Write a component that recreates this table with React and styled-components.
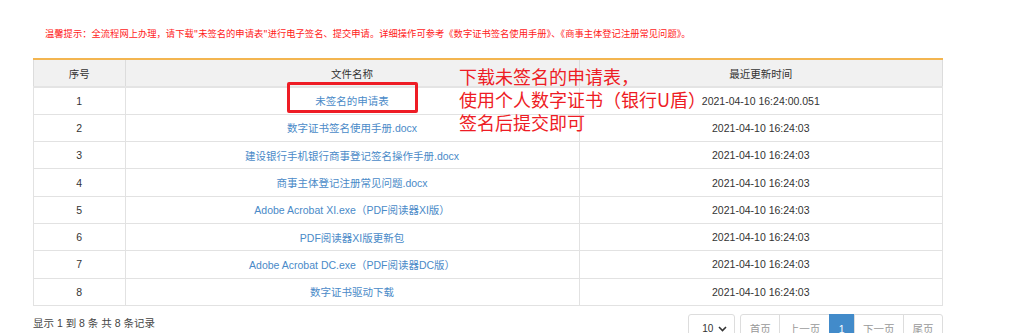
import React from "react";
import styled, { createGlobalStyle } from "styled-components";

const Global = createGlobalStyle`
  html, body { margin: 0; padding: 0; background: #fff; }
  body {
    font-family: "Liberation Sans", Arial, "Noto Sans CJK SC", sans-serif;
    font-size: 10.5px;
    color: #333;
  }
`;

const Page = styled.div`
  width: 1020px;
  height: 333px;
  overflow: hidden;
  padding: 0 77px 0 33px;
  box-sizing: border-box;
`;

const Notice = styled.p`
  margin: 0;
  padding: 27px 0 0 12px;
  height: 58px;
  box-sizing: border-box;
  line-height: 13px;
  font-size: 9.3px;
  color: #ff1a1a;
  font-family: "Noto Sans CJK SC", sans-serif;
`;

const TableWrap = styled.div`
  position: relative;
  width: 910px;
`;

const Table = styled.table`
  width: 100%;
  border-collapse: collapse;
  table-layout: fixed;
  border-top: 2px solid #f3b550;
`;

const Th = styled.th`
  width: ${p => p.w};
  height: 26px;
  background: #f1f1f1;
  font-weight: normal;
  color: #333;
  border-left: 1px solid #dcdcdc;
  border-right: 1px solid #dcdcdc;
  border-bottom: 2px solid #e4e4e4;
  padding: 0;
`;

const Tr = styled.tr`
  height: 27.3px;
`;

const Td = styled.td`
  border: 1px solid #e2e2e2;
  text-align: center;
  padding: 0;
  color: #333;
`;

const Link = styled.a`
  color: #4a8ac8;
  text-decoration: none;
`;

const Highlight = styled.div`
  position: absolute;
  left: 254px;
  top: 24px;
  width: 125px;
  height: 25px;
  border: 3px solid #ee1c25;
  border-radius: 2px;
  pointer-events: none;
`;

const Annotation = styled.div`
  position: absolute;
  left: 426px;
  top: 7px;
  font-size: 18px;
  line-height: 23px;
  color: #ee1c25;
  font-family: "Noto Sans CJK SC", sans-serif;
  white-space: nowrap;
`;

const Footer = styled.div`
  display: flex;
  justify-content: space-between;
  align-items: flex-start;
  width: 910px;
  margin-top: 8px;
`;

const Summary = styled.span`
  margin-top: 2px;
  line-height: 14px;
  font-size: 10.5px;
  color: #444;
`;

const Pager = styled.div`
  display: flex;
  align-items: flex-start;
  gap: 5px;
`;

const Select = styled.div`
  width: 47px;
  height: 30px;
  box-sizing: border-box;
  border: 1px solid #ddd;
  border-radius: 3px;
  display: flex;
  align-items: center;
  justify-content: space-between;
  padding: 0 7px 0 13px;
  font-size: 10px;
  color: #333;
`;

const Pages = styled.div`
  display: flex;
`;

const PageBtn = styled.span`
  height: 30px;
  box-sizing: border-box;
  padding: 0 ${p => (p.active ? 9 : 8.5)}px;
  display: flex;
  align-items: center;
  font-size: 10.5px;
  color: ${p => (p.active ? "#fff" : "#999")};
  background: ${p => (p.active ? "#428bca" : "#fff")};
  border: 1px solid ${p => (p.active ? "#428bca" : "#ddd")};
  margin-left: -1px;
  &:first-child {
    margin-left: 0;
    border-radius: 3px 0 0 3px;
  }
  &:last-child {
    border-radius: 0 3px 3px 0;
  }
`;

const rows = [
  ["1", "未签名的申请表", "2021-04-10 16:24:00.051"],
  ["2", "数字证书签名使用手册.docx", "2021-04-10 16:24:03"],
  ["3", "建设银行手机银行商事登记签名操作手册.docx", "2021-04-10 16:24:03"],
  ["4", "商事主体登记注册常见问题.docx", "2021-04-10 16:24:03"],
  ["5", "Adobe Acrobat XI.exe（PDF阅读器XI版）", "2021-04-10 16:24:03"],
  ["6", "PDF阅读器XI版更新包", "2021-04-10 16:24:03"],
  ["7", "Adobe Acrobat DC.exe（PDF阅读器DC版）", "2021-04-10 16:24:03"],
  ["8", "数字证书驱动下载", "2021-04-10 16:24:03"],
];

export default function App() {
  return (
    <Page>
      <Global />
      <Notice>
        温馨提示：全流程网上办理，请下载"未签名的申请表"进行电子签名、提交申请。详细操作可参考《数字证书签名使用手册》、《商事主体登记注册常见问题》。
      </Notice>
      <TableWrap>
        <Table>
          <thead>
            <tr>
              <Th w="10%">序号</Th>
              <Th w="50%">文件名称</Th>
              <Th w="40%">最近更新时间</Th>
            </tr>
          </thead>
          <tbody>
            {rows.map(r => (
              <Tr key={r[0]}>
                <Td>{r[0]}</Td>
                <Td>
                  <Link href="#">{r[1]}</Link>
                </Td>
                <Td>{r[2]}</Td>
              </Tr>
            ))}
          </tbody>
        </Table>
        <Highlight />
        <Annotation>
          下载未签名的申请表，
          <br />
          使用个人数字证书（银行U盾）
          <br />
          签名后提交即可
        </Annotation>
      </TableWrap>
      <Footer>
        <Summary>显示 1 到 8 条 共 8 条记录</Summary>
        <Pager>
          <Select>
            <span>10</span>
            <svg width="9" height="6" viewBox="0 0 9 6">
              <path d="M1 1l3.5 3.5L8 1" stroke="#333" strokeWidth="1.6" fill="none" />
            </svg>
          </Select>
          <Pages>
            <PageBtn>首页</PageBtn>
            <PageBtn>上一页</PageBtn>
            <PageBtn active>1</PageBtn>
            <PageBtn>下一页</PageBtn>
            <PageBtn>尾页</PageBtn>
          </Pages>
        </Pager>
      </Footer>
    </Page>
  );
}
